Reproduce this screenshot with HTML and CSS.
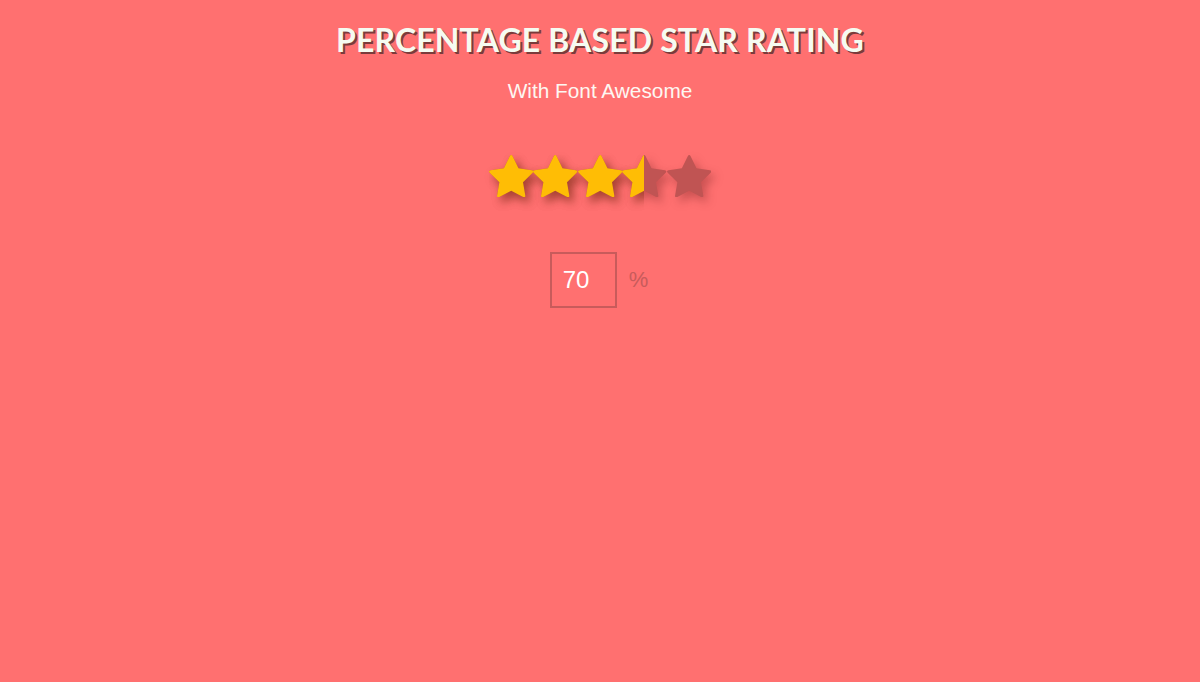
FILE: index.html
```html
<!DOCTYPE html>
<html>
<head>
<meta charset="utf-8">
<link rel="stylesheet" href="styles.css">
</head>
<body>
<main class="page">
  <h1 class="title">PERCENTAGE BASED STAR RATING</h1>
  <p class="subtitle">With Font Awesome</p>
  <div class="rating">
    <div class="stars stars-back">
      <svg class="star" viewBox="64 32 1664 1587"><path d="M1728 647q0 22-26 48l-363 354 86 500q1 7 1 20 0 21-10.5 35.5t-30.5 14.5q-19 0-40-12l-449-236-449 236q-22 12-40 12-21 0-31.5-14.5t-10.5-35.5q0-6 2-20l86-500-364-354q-25-27-25-48 0-37 56-46l502-73 225-455q19-41 49-41t49 41l225 455 502 73q56 9 56 46z"/></svg>
      <svg class="star" viewBox="64 32 1664 1587"><path d="M1728 647q0 22-26 48l-363 354 86 500q1 7 1 20 0 21-10.5 35.5t-30.5 14.5q-19 0-40-12l-449-236-449 236q-22 12-40 12-21 0-31.5-14.5t-10.5-35.5q0-6 2-20l86-500-364-354q-25-27-25-48 0-37 56-46l502-73 225-455q19-41 49-41t49 41l225 455 502 73q56 9 56 46z"/></svg>
      <svg class="star" viewBox="64 32 1664 1587"><path d="M1728 647q0 22-26 48l-363 354 86 500q1 7 1 20 0 21-10.5 35.5t-30.5 14.5q-19 0-40-12l-449-236-449 236q-22 12-40 12-21 0-31.5-14.5t-10.5-35.5q0-6 2-20l86-500-364-354q-25-27-25-48 0-37 56-46l502-73 225-455q19-41 49-41t49 41l225 455 502 73q56 9 56 46z"/></svg>
      <svg class="star" viewBox="64 32 1664 1587"><path d="M1728 647q0 22-26 48l-363 354 86 500q1 7 1 20 0 21-10.5 35.5t-30.5 14.5q-19 0-40-12l-449-236-449 236q-22 12-40 12-21 0-31.5-14.5t-10.5-35.5q0-6 2-20l86-500-364-354q-25-27-25-48 0-37 56-46l502-73 225-455q19-41 49-41t49 41l225 455 502 73q56 9 56 46z"/></svg>
      <svg class="star" viewBox="64 32 1664 1587"><path d="M1728 647q0 22-26 48l-363 354 86 500q1 7 1 20 0 21-10.5 35.5t-30.5 14.5q-19 0-40-12l-449-236-449 236q-22 12-40 12-21 0-31.5-14.5t-10.5-35.5q0-6 2-20l86-500-364-354q-25-27-25-48 0-37 56-46l502-73 225-455q19-41 49-41t49 41l225 455 502 73q56 9 56 46z"/></svg>
    </div>
    <div class="stars stars-front" style="width: 70%">
      <svg class="star" viewBox="64 32 1664 1587"><path d="M1728 647q0 22-26 48l-363 354 86 500q1 7 1 20 0 21-10.5 35.5t-30.5 14.5q-19 0-40-12l-449-236-449 236q-22 12-40 12-21 0-31.5-14.5t-10.5-35.5q0-6 2-20l86-500-364-354q-25-27-25-48 0-37 56-46l502-73 225-455q19-41 49-41t49 41l225 455 502 73q56 9 56 46z"/></svg>
      <svg class="star" viewBox="64 32 1664 1587"><path d="M1728 647q0 22-26 48l-363 354 86 500q1 7 1 20 0 21-10.5 35.5t-30.5 14.5q-19 0-40-12l-449-236-449 236q-22 12-40 12-21 0-31.5-14.5t-10.5-35.5q0-6 2-20l86-500-364-354q-25-27-25-48 0-37 56-46l502-73 225-455q19-41 49-41t49 41l225 455 502 73q56 9 56 46z"/></svg>
      <svg class="star" viewBox="64 32 1664 1587"><path d="M1728 647q0 22-26 48l-363 354 86 500q1 7 1 20 0 21-10.5 35.5t-30.5 14.5q-19 0-40-12l-449-236-449 236q-22 12-40 12-21 0-31.5-14.5t-10.5-35.5q0-6 2-20l86-500-364-354q-25-27-25-48 0-37 56-46l502-73 225-455q19-41 49-41t49 41l225 455 502 73q56 9 56 46z"/></svg>
      <svg class="star" viewBox="64 32 1664 1587"><path d="M1728 647q0 22-26 48l-363 354 86 500q1 7 1 20 0 21-10.5 35.5t-30.5 14.5q-19 0-40-12l-449-236-449 236q-22 12-40 12-21 0-31.5-14.5t-10.5-35.5q0-6 2-20l86-500-364-354q-25-27-25-48 0-37 56-46l502-73 225-455q19-41 49-41t49 41l225 455 502 73q56 9 56 46z"/></svg>
      <svg class="star" viewBox="64 32 1664 1587"><path d="M1728 647q0 22-26 48l-363 354 86 500q1 7 1 20 0 21-10.5 35.5t-30.5 14.5q-19 0-40-12l-449-236-449 236q-22 12-40 12-21 0-31.5-14.5t-10.5-35.5q0-6 2-20l86-500-364-354q-25-27-25-48 0-37 56-46l502-73 225-455q19-41 49-41t49 41l225 455 502 73q56 9 56 46z"/></svg>
    </div>
  </div>
  <div class="control">
    <div class="input-box">70</div>
    <span class="percent">%</span>
  </div>
</main>
</body>
</html>
```
FILE: styles.css
```css
html, body {
  margin: 0;
  padding: 0;
  background: #ff7070;
  height: 100%;
}
.page {
  display: flex;
  flex-direction: column;
  align-items: center;
  padding-top: 21px;
}
.title {
  margin: 0;
  font-family: Lato, "Open Sans", sans-serif;
  font-weight: 700;
  font-size: 32px;
  line-height: 38px;
  color: #f5fbf1;
  text-shadow: 2px 2px 0 #7b3b3b;
  letter-spacing: 0.15px;
}
.subtitle {
  margin: 20px 0 0;
  font-family: "Liberation Sans", Arial, sans-serif;
  font-size: 20.8px;
  line-height: 24px;
  color: #fdf7f2;
}
.rating {
  position: relative;
  margin-top: 52px;
  width: 222px;
  height: 44px;
}
.stars {
  display: flex;
  height: 60px;
  white-space: nowrap;
}
.stars-back {
  overflow: visible;
}
.stars-front {
  position: absolute;
  left: 0;
  top: 0;
  overflow: hidden;
}
.star {
  flex: 0 0 auto;
  width: 44.4px;
  height: 42.4px;
}
.stars-back .star {
  fill: #c05453;
  filter: drop-shadow(4px 5px 5px rgba(90, 20, 20, 0.32));
}
.stars-front .star {
  fill: #ffbd05;
  filter: drop-shadow(4px 5px 5px rgba(110, 40, 0, 0.38));
}
.control {
  display: flex;
  align-items: center;
  margin-top: 53px;
  margin-right: 2px;
}
.input-box {
  box-sizing: border-box;
  width: 67px;
  height: 56px;
  border: 2px solid #c85b5b;
  padding-left: 11px;
  font-family: "Liberation Sans", Arial, sans-serif;
  font-size: 24px;
  line-height: 52px;
  color: #ffffff;
}
.percent {
  margin-left: 12px;
  font-family: "Liberation Sans", Arial, sans-serif;
  font-size: 22px;
  color: #c85b5b;
}
```
